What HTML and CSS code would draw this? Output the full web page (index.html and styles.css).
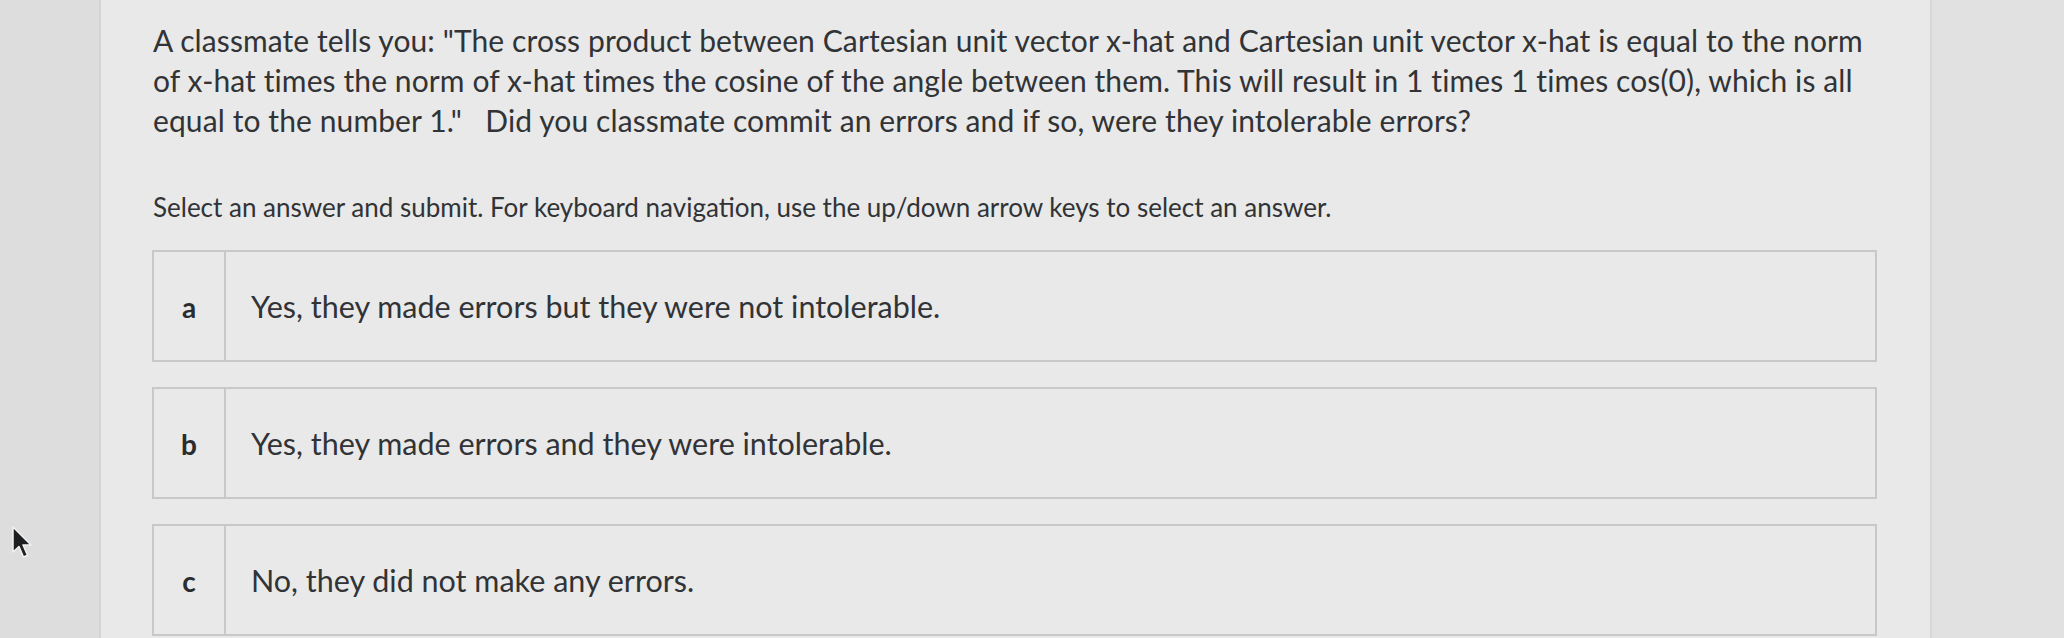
FILE: index.html
```html
<!DOCTYPE html>
<html>
<head>
    <title>Question</title>
    <link rel="stylesheet" href="styles.css">
</head>
<body>
    <div class="page">
        <div class="gutter"></div>

        <div class="panel">
            <p class="question">A classmate tells you: "The cross product between Cartesian unit vector x-hat and Cartesian unit vector x-hat is equal to the norm of x-hat times the norm of x-hat times the cosine of the angle between them. This will result in 1 times 1 times cos(0), which is all equal to the number 1."&nbsp;&nbsp; Did you classmate commit an errors and if so, were they intolerable errors?</p>

            <p class="hint">Select an answer and submit. For keyboard navigation, use the up/down arrow keys to select an answer.</p>

            <ul class="choices">
                <li class="choice">
                    <span class="letter">a</span>
                    <span class="answer">Yes, they made errors but they were not intolerable.</span>
                </li>
                <li class="choice">
                    <span class="letter">b</span>
                    <span class="answer">Yes, they made errors and they were intolerable.</span>
                </li>
                <li class="choice">
                    <span class="letter">c</span>
                    <span class="answer">No, they did not make any errors.</span>
                </li>
            </ul>
        </div>

        <div class="gutter-right"></div>
    </div>

    <svg class="cursor" width="24" height="34" viewBox="0 0 24 34">
        <path d="M2 1 L2 26 L8 20.5 L12.5 31 L16.5 29.3 L12 19 L20 19 Z" fill="#1e1f21" stroke="#f2f2f2" stroke-width="1.5" stroke-linejoin="round"/>
    </svg>
</body>
</html>
```

FILE: styles.css
```css
html, body {
    margin: 0;
    height: 100%;
}

body {
    font-family: Lato, 'Noto Sans', sans-serif;
    background: #dfe0df;
    color: #313336;
    overflow: hidden;
    position: relative;
}

.page {
    display: flex;
    height: 638px;
}

.gutter {
    width: 99px;
    flex-shrink: 0;
    background: #dcdddc;
    border-right: 2px solid #d3d4d4;
}

.panel {
    width: 1829px;
    flex-shrink: 0;
    box-sizing: border-box;
    padding: 20px 53px 0 51px;
    background: #e8e9e8;
}

.gutter-right {
    flex-grow: 1;
    background: #e0e1e0;
    border-left: 2px solid #d6d7d7;
}

.question {
    margin: 0 0 52px 1px;
    font-size: 30px;
    line-height: 40px;
    letter-spacing: 0.1px;
}

.hint {
    margin: 0 0 28px 1px;
    font-size: 26px;
    line-height: 30px;
}

.choices {
    list-style: none;
    margin: 0;
    padding: 0;
}

.choice {
    display: flex;
    height: 112px;
    box-sizing: border-box;
    margin-bottom: 25px;
    border: 2px solid #c6c8c9;
}

.letter {
    width: 70px;
    flex-shrink: 0;
    display: flex;
    align-items: center;
    justify-content: center;
    border-right: 2px solid #c6c8c9;
    font-size: 28px;
    font-weight: 700;
    color: #2a2c2f;
    padding-top: 2px;
}

.answer {
    display: flex;
    align-items: center;
    padding-left: 25px;
    font-size: 30.5px;
}

.cursor {
    position: absolute;
    left: 11px;
    top: 526px;
}
```
